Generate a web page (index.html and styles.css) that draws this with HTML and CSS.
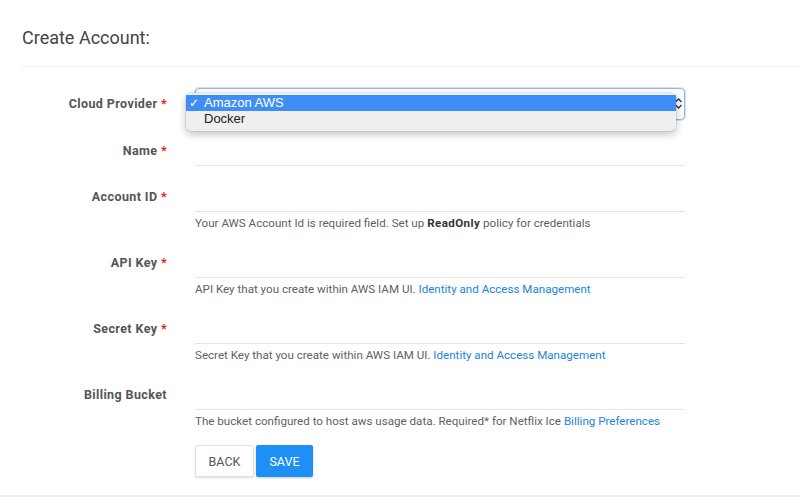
FILE: index.html
```html
<!DOCTYPE html>
<html>
<head>
<meta charset="utf-8">
<link rel="stylesheet" href="styles.css">
</head>
<body>
<div class="page">
  <h1 class="title">Create Account:</h1>
  <form class="form">
    <div class="row">
      <label class="label">Cloud Provider <span class="req">*</span></label>
      <div class="field">
        <div class="select">
          <span class="select-arrows">
            <svg width="7" height="11" viewBox="0 0 7 11"><path d="M0.5 4 L3.5 1 L6.5 4 M0.5 7 L3.5 10 L6.5 7" fill="none" stroke="#333" stroke-width="1.3"/></svg>
          </span>
        </div>
        <div class="menu">
          <div class="opt opt-active"><span class="check">✓</span>Amazon AWS</div>
          <div class="opt"><span class="check"></span>Docker</div>
        </div>
      </div>
    </div>
    <div class="row">
      <label class="label">Name <span class="req">*</span></label>
      <div class="field"><div class="input"></div></div>
    </div>
    <div class="row">
      <label class="label">Account ID <span class="req">*</span></label>
      <div class="field">
        <div class="input"></div>
        <p class="help">Your AWS Account Id is required field. Set up <b>ReadOnly</b> policy for credentials</p>
      </div>
    </div>
    <div class="row">
      <label class="label">API Key <span class="req">*</span></label>
      <div class="field">
        <div class="input"></div>
        <p class="help">API Key that you create within AWS IAM UI. <a href="#">Identity and Access Management</a></p>
      </div>
    </div>
    <div class="row">
      <label class="label">Secret Key <span class="req">*</span></label>
      <div class="field">
        <div class="input"></div>
        <p class="help">Secret Key that you create within AWS IAM UI. <a href="#">Identity and Access Management</a></p>
      </div>
    </div>
    <div class="row">
      <label class="label">Billing Bucket</label>
      <div class="field">
        <div class="input"></div>
        <p class="help">The bucket configured to host aws usage data. Required* for Netflix Ice <a href="#">Billing Preferences</a></p>
      </div>
    </div>
    <div class="row">
      <span class="label"></span>
      <div class="field buttons">
        <button type="button" class="btn btn-back">BACK</button>
        <button type="button" class="btn btn-save">SAVE</button>
      </div>
    </div>
  </form>
  <div class="footer-line"></div>
</div>
</body>
</html>
```
FILE: styles.css
```css
* { box-sizing: border-box; }
html, body { margin: 0; padding: 0; background: #fff; }
body {
  font-family: Roboto, "Liberation Sans", Arial, sans-serif;
  color: #444;
  width: 800px;
  height: 502px;
  overflow: hidden;
}
.page { display: flex; flex-direction: column; }
.title {
  margin: 0 0 0 22px;
  height: 67px;
  padding-top: 26px;
  font-size: 18px;
  font-weight: 400;
  line-height: 24px;
  color: #444;
  border-bottom: 1px solid #eceeef;
}
.form { padding-top: 21px; display: flex; flex-direction: column; }
.row {
  display: grid;
  grid-template-columns: 195px 490px;
  margin-bottom: 15px;
}
.label {
  padding-right: 28px;
  text-align: right;
  font-size: 12.5px;
  font-weight: 700;
  letter-spacing: 0.4px;
  color: #555;
  line-height: 31px;
}
.req { color: #e0201c; }
.field { position: relative; }
.input {
  height: 31px;
  border-bottom: 1px solid #e4e4e4;
}
.help {
  margin: 0;
  padding-top: 2px;
  font-size: 11.6px;
  line-height: 18px;
  color: #5f5f5f;
}
.help b { color: #333; font-weight: 700; letter-spacing: 0.4px; }
.help a { color: #2184d8; text-decoration: none; }
.select {
  height: 32px;
  border: 1px solid #8db9ec;
  border-radius: 4px;
  box-shadow: 0 0 0 1px #cfe2f8;
  position: relative;
}
.select-arrows {
  position: absolute;
  right: 2px;
  top: 9px;
  display: flex;
}
.menu {
  position: absolute;
  left: -9px;
  top: 5px;
  width: 490px;
  height: 38px;
  padding-top: 2px;
  background: #efefef;
  border-radius: 5px;
  box-shadow: 0 3px 8px rgba(0,0,0,0.25), 0 0 0 0.5px rgba(0,0,0,0.12);
  font-family: "Liberation Sans", Arial, sans-serif;
  font-size: 13px;
}
.opt {
  height: 16px;
  line-height: 16px;
  display: flex;
  color: #222;
}
.opt-active { background: #3f8ef5; color: #fff; }
.check { width: 18px; padding-left: 3px; font-size: 12px; }
.buttons { display: flex; gap: 2px; }
.btn {
  height: 32px;
  border-radius: 2px;
  font-family: Roboto, "Liberation Sans", Arial, sans-serif;
  font-size: 12.5px;
  padding: 0;
  cursor: pointer;
}
.btn-back {
  width: 59px;
  background: #fff;
  color: #555;
  border: 1px solid #e2e2e2;
  box-shadow: 0 1px 2px rgba(0,0,0,0.15);
}
.btn-save {
  width: 57px;
  background: #1e90f5;
  color: #fff;
  border: none;
  box-shadow: 0 1px 2px rgba(0,0,0,0.2);
}
.footer-line {
  margin-top: 3px;
  border-top: 2px solid #eeeeee;
}
```
